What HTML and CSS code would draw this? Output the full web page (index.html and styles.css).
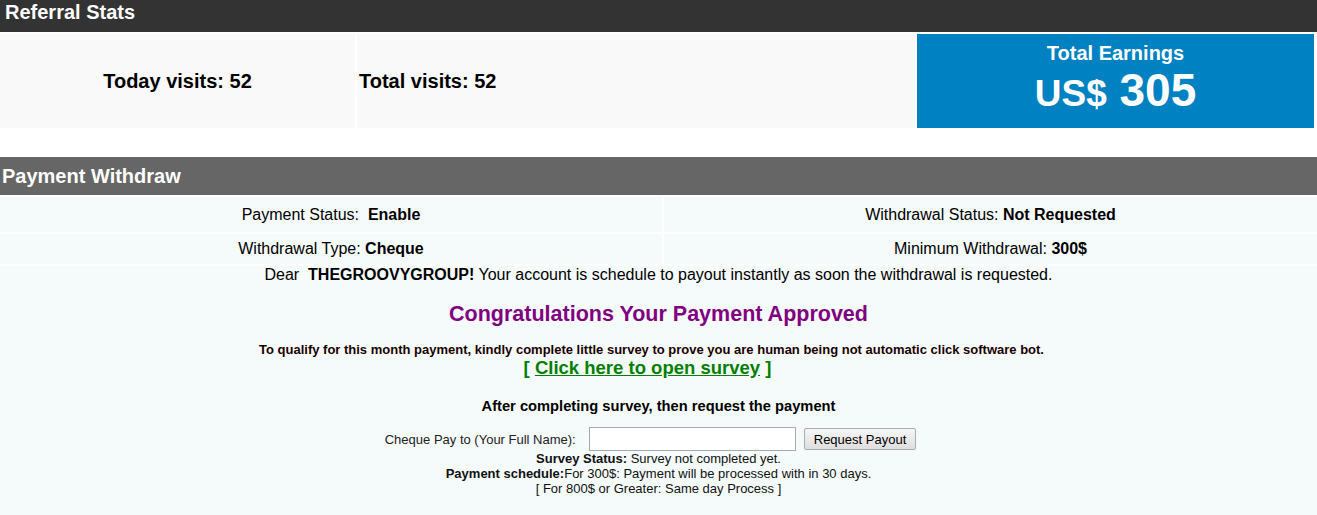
FILE: index.html
```html
<!DOCTYPE html>
<html lang="en">
<head>
  <meta charset="UTF-8">
  <title>Referral Stats</title>
  <link rel="stylesheet" href="styles.css">
</head>
<body>

<div class="bar bar-dark">Referral Stats</div>
<div class="stats">
  <div class="stat stat-today">Today visits: 52</div>
  <div class="stat stat-total">Total visits: 52</div>
  <div class="earn">
    <div class="earn-title">Total Earnings</div>
    <div class="earn-amount"><span class="cur">US$</span> 305</div>
  </div>
</div>

<div class="bar bar-gray">Payment Withdraw</div>
<div class="withdraw">
  <div class="info">
    <div class="cell">Payment Status:&nbsp; <b>Enable</b></div>
    <div class="cell">Withdrawal Status: <b>Not Requested</b></div>
    <div class="cell cell-low">Withdrawal Type: <b>Cheque</b></div>
    <div class="cell cell-low">Minimum Withdrawal: <b>300$</b></div>
  </div>

  <p class="dear">Dear&nbsp; <b>THEGROOVYGROUP!</b> Your account is schedule to payout instantly as soon the withdrawal is requested.</p>

  <h2 class="approved">Congratulations Your Payment Approved</h2>

  <p class="qualify">To qualify for this month payment, kindly complete little survey to prove you are human being not automatic click software bot.</p>
  <p class="survey">[ <a href="#">Click here to open survey</a> ]</p>

  <p class="after">After completing survey, then request the payment</p>

  <form class="payout" action="#">
    <label for="fullname">Cheque Pay to (Your Full Name):</label>
    <input type="text" id="fullname">
    <button type="button">Request Payout</button>
  </form>
  <div class="notes">
    <div><b>Survey Status:</b> Survey not completed yet.</div>
    <div><b>Payment schedule:</b>For 300$: Payment will be processed with in 30 days.</div>
    <div>[ For 800$ or Greater: Same day Process ]</div>
  </div>
</div>

</body>
</html>
```

FILE: styles.css
```css
* {
  margin: 0;
  padding: 0;
  box-sizing: border-box;
}
body {
  font-family: "Liberation Sans", Arial, sans-serif;
  font-size: 16px;
  color: #000;
  background-color: #fff;
}

.bar {
  color: #fff;
  font-size: 20px;
  font-weight: bold;
}
.bar-dark {
  height: 32px;
  line-height: 24px;
  padding-left: 5px;
  background-color: #333;
}
.bar-gray {
  height: 38px;
  line-height: 38px;
  padding-left: 2px;
  background-color: #666;
}

.stats {
  display: grid;
  grid-template-columns: 355px 558px 397px;
  gap: 2px;
  margin-top: 2px;
  height: 94px;
  margin-bottom: 29px;
}
.stat {
  background-color: #f9f9f9;
  font-size: 20px;
  font-weight: bold;
  display: flex;
  align-items: center;
}
.stat-today {
  justify-content: center;
}
.stat-total {
  padding-left: 2px;
}
.earn {
  background-color: #0081c2;
  color: #fff;
  text-align: center;
  font-weight: bold;
  padding-top: 8px;
}
.earn-title {
  font-size: 20px;
  line-height: 22px;
}
.earn-amount {
  font-size: 46px;
  line-height: 52px;
}
.earn-amount .cur {
  font-size: 37px;
}

.withdraw {
  background-color: #f5fafa;
  padding-bottom: 40px;
}
.info {
  display: grid;
  grid-template-columns: 662px 1fr;
  gap: 2px;
  background-color: #fff;
  padding-top: 2px;
  padding-bottom: 2px;
}
.cell {
  background-color: #f5fafa;
  text-align: center;
  height: 35px;
  line-height: 36px;
}
.cell-low {
  height: 30px;
  line-height: 30px;
}

.dear {
  text-align: center;
  line-height: 18px;
}
.approved {
  text-align: center;
  color: #800080;
  font-size: 21.5px;
  line-height: 26px;
  margin-top: 17px;
}
.qualify {
  text-align: center;
  font-size: 13px;
  font-weight: bold;
  color: #1a0000;
  margin-top: 15px;
  line-height: 15px;
  padding-right: 14px;
}
.survey {
  text-align: center;
  font-size: 18.5px;
  font-weight: bold;
  color: #008000;
  line-height: 22px;
  padding-right: 22px;
}
.survey a {
  color: #008000;
}
.after {
  text-align: center;
  font-size: 14.7px;
  font-weight: bold;
  margin-top: 18px;
  line-height: 18px;
}
.payout {
  display: flex;
  justify-content: center;
  align-items: center;
  margin-top: 12px;
  padding-right: 16px;
  font-size: 13px;
}
.payout label {
  margin-right: 13px;
  color: #222;
}
.payout input {
  width: 207px;
  height: 24px;
  border: 1px solid #a9a9a9;
  background-color: #fff;
  margin-right: 8px;
}
.payout button {
  height: 22px;
  padding: 0 9px;
  font-family: "Liberation Sans", Arial, sans-serif;
  font-size: 13px;
  color: #000;
  background: linear-gradient(#f6f6f6, #dedede);
  border: 1px solid #acacac;
  border-radius: 2px;
}
.notes {
  text-align: center;
  font-size: 13px;
  line-height: 15px;
  color: #111;
}
```
